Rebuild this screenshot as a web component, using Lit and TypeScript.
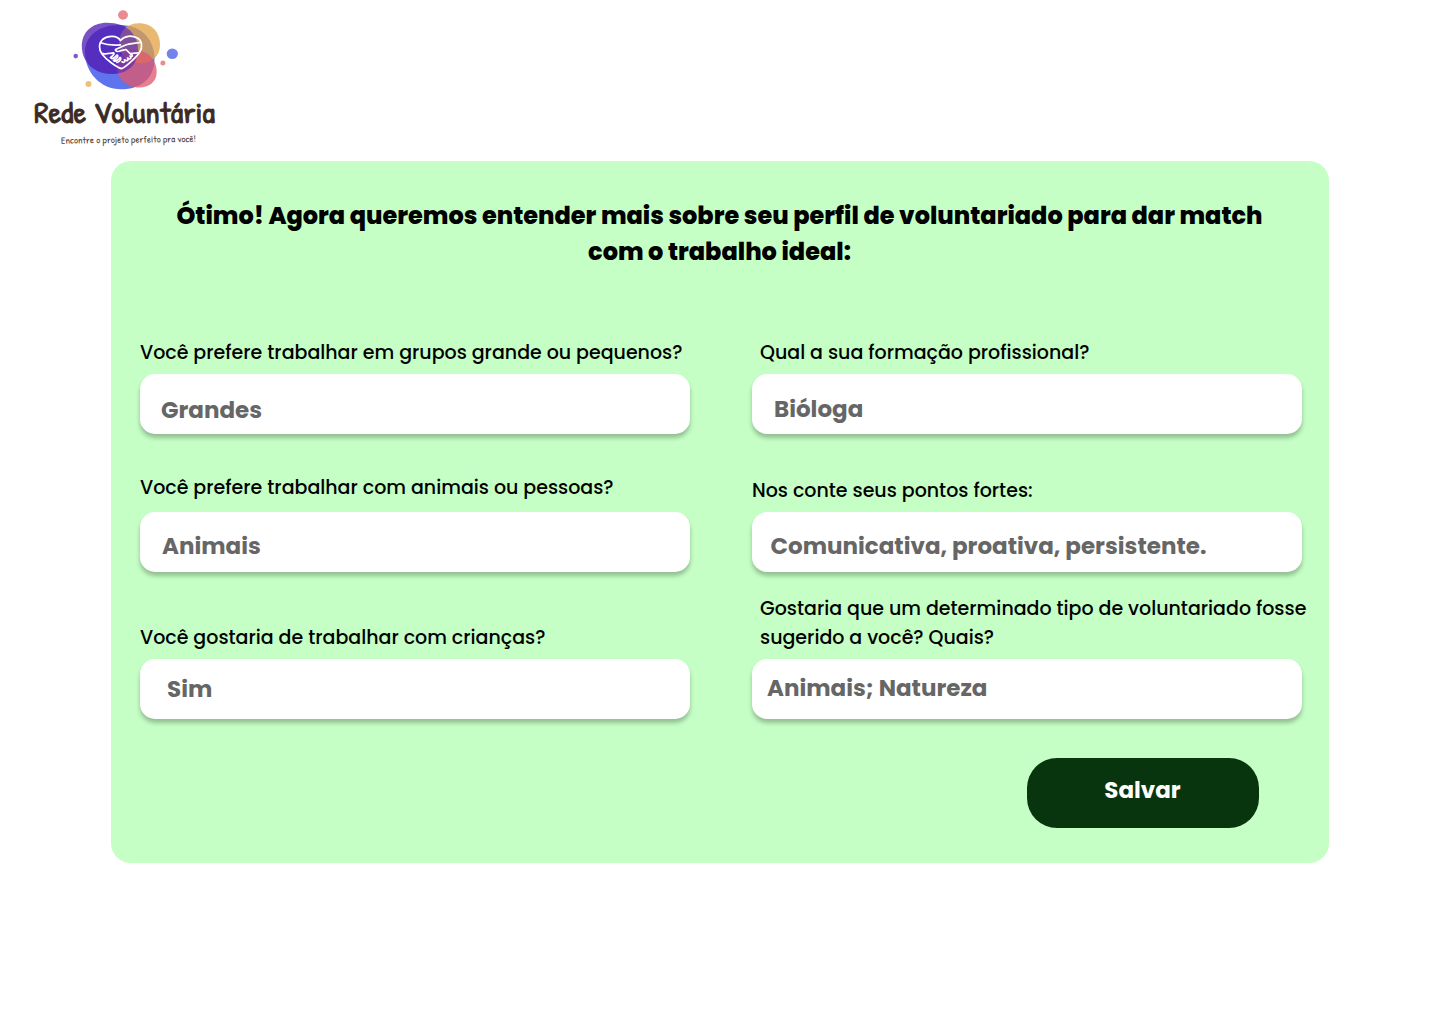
import { LitElement, html, css } from "lit";
import { customElement } from "lit/decorators.js";
import { styleMap } from "lit/directives/style-map.js";

interface Field {
  label: string[];
  indent: number;
  height: number;
  gap: number;
  value: string;
  padTop: number;
  padLeft: number;
}

const LEFT: Field[] = [
  { label: ["Você prefere trabalhar em grupos grande ou pequenos?"], indent: 0, height: 97, gap: 7, value: "Grandes", padTop: 18, padLeft: 21 },
  { label: ["Você prefere trabalhar com animais ou pessoas?"], indent: 0, height: 138, gap: 10, value: "Animais", padTop: 16, padLeft: 22 },
  { label: ["Você gostaria de trabalhar com crianças?"], indent: 0, height: 147, gap: 7, value: "Sim", padTop: 12, padLeft: 27 },
];

const RIGHT: Field[] = [
  { label: ["Qual a sua formação profissional?"], indent: 8, height: 97, gap: 7, value: "Bióloga", padTop: 17, padLeft: 22 },
  { label: ["Nos conte seus pontos fortes:"], indent: 0, height: 138, gap: 7, value: "Comunicativa, proativa, persistente.", padTop: 16, padLeft: 18.5 },
  { label: ["Gostaria que um determinado tipo de voluntariado fosse", "sugerido a você? Quais?"], indent: 8, height: 147, gap: 7, value: "Animais; Natureza", padTop: 11, padLeft: 15 },
];

@customElement("brand-logo")
export class BrandLogo extends LitElement {
  static styles = css`
    :host { display: block; width: 250px; height: 161px; }
    svg { display: block; }
    .name { font: 400 30px "Patrick Hand", "Open Sans", sans-serif; fill: #3b2a25; stroke: #3b2a25; stroke-width: 0.8; stroke-linejoin: round; }
    .tag { font: 400 9.5px "Patrick Hand", "Open Sans", sans-serif; fill: #4b3b36; }
    .heart { fill: none; stroke: #fff; stroke-width: 1.7; stroke-linecap: round; stroke-linejoin: round; }
  `;
  render() {
    return html`
      <svg width="250" height="161" viewBox="0 0 250 161">
        <path fill="#6073ee" d="M120 25C143 25 154.500 41 154.500 59C154.500 78 141 89.300 121 89.300C101 89.300 85 73 85 52C85 36 99 25 120 25Z" />
        <path fill="#5a2bb4" fill-opacity=".82" d="M107 22.700C127 22.700 138 34 138 50C138 65 127 74 112 74C95 74 81.800 63 81.800 46C81.800 32 92 22.700 107 22.700Z" />
        <path fill="#e2a344" fill-opacity=".76" d="M139 23.200C152 23.200 160 32 160 45C160 56 152 63.200 141 63.200C128 63.200 119 54 119 43C119 31 127 23.200 139 23.200Z" />
        <path fill="#e0586a" fill-opacity=".76" d="M135 50.200C148 50.200 156.700 60 156.700 72C156.700 82 149 87.500 139 87.500C127 87.500 117 79 117 67C117 57 124 50.200 135 50.200Z" />
        <path fill="#5126bf" fill-opacity=".6" d="M119 25C130 27 138 37 138 50C138 65 127 74 112 74C102 74 94 70 89 65C86 59 85 56 85 50C86 36 99 25 119 25Z" />
        <ellipse cx="123" cy="15" rx="5" ry="4.700" fill="#e98c92" />
        <ellipse cx="172.300" cy="53.700" rx="5.600" ry="5.300" fill="#7482ee" />
        <circle cx="162.900" cy="63" r="2.500" fill="#e98c92" />
        <circle cx="75.700" cy="56.100" r="2.300" fill="#8759c4" />
        <circle cx="88.500" cy="83.900" r="3" fill="#efbf7c" />
        <g class="heart">
          <path d="M120.500 40.500C117 35.300 108 35.200 102.500 39.500C98.500 43.500 98.700 49.500 102 54C106 59.500 116 67 121.500 68.600C125 68 136 57.500 139.500 52.500C143 47 142 40.500 137.500 38C131.500 35.200 124.500 35.500 120.500 40.500Z" />
          <path d="M100.500 42.800C107 45 113 45.500 120.500 44.800M140.500 42.500C134 43.500 129 43.500 124.500 45.500L115.500 49.500C115.500 52 118.500 52 122 50.300L126 49.500L130.500 54" />
          <path d="M103 53.500C106 55 107.500 52.800 110.500 53.300L113.500 52.800C115 53.500 113 56 110.500 57.500C112 60 115 57.500 117 55C119 55.500 117 59 113.500 60.500C115 62.500 118.500 60 120 57.500C122 59 119.500 62 117 62.500M122 61.800C124 63 125.500 61.500 124.500 59.800C127 61.500 129 60.500 127.500 58C130 60 132 58.500 130 56C132.500 57.500 133.500 55.500 130.500 53.500L138 52.800" />
        </g>
        <text class="name" x="34" y="122.700" textLength="181" lengthAdjust="spacingAndGlyphs">Rede Voluntária</text>
        <text class="tag" x="61" y="143.700" textLength="135" lengthAdjust="spacingAndGlyphs" transform="rotate(-.7 61 144)">Encontre o projeto perfeito pra você!</text>
      </svg>
    `;
  }
}

@customElement("app-root")
export class AppRoot extends LitElement {
  static styles = css`
    :host { display: block; width: 1440px; height: 1024px; background: #fff; overflow: hidden; font-family: Poppins, Inter, "Open Sans", sans-serif; color: #000; }
    .card { box-sizing: border-box; width: 1218px; height: 702px; margin-left: 111px; padding: 37px 27px 35px 29px; border-radius: 20px; background: #c5ffc5; display: flex; flex-direction: column; }
    h1 { margin: 0 3px 0 0; text-align: center; font-size: 24px; line-height: 36px; font-weight: 800; white-space: nowrap; }
    .columns { display: flex; gap: 62px; margin-top: 67px; }
    .column { width: 550px; }
    .field { display: flex; flex-direction: column; justify-content: flex-end; }
    .label { font-size: 19px; line-height: 29px; font-weight: 500; white-space: nowrap; }
    .line { display: block; }
    .value { box-sizing: border-box; flex: none; height: 60px; border-radius: 15px; background: #fff; box-shadow: 0 4px 4px rgba(0, 0, 0, 0.25); color: #666; font-size: 23px; line-height: 36px; font-weight: 700; white-space: nowrap; }
    .save { box-sizing: border-box; align-self: flex-end; width: 232px; height: 70px; margin: 39px 43px 0 0; padding: 14px 1px 20px 0; border: 0; border-radius: 30px; background: #09350e; color: #fff; font: inherit; font-size: 23px; line-height: 36px; font-weight: 700; }
  `;

  private field(f: Field) {
    return html`
      <div class="field" style=${styleMap({ height: `${f.height}px` })}>
        <div class="label" style=${styleMap({ marginLeft: `${f.indent}px`, marginBottom: `${f.gap}px` })}>
          ${f.label.map((t) => html`<span class="line">${t}</span>`)}
        </div>
        <div class="value" style=${styleMap({ padding: `${f.padTop}px 0 0 ${f.padLeft}px` })}>${f.value}</div>
      </div>
    `;
  }

  render() {
    return html`
      <brand-logo></brand-logo>
      <main class="card">
        <h1>Ótimo! Agora queremos entender mais sobre seu perfil de voluntariado para dar match<br />com o trabalho ideal:</h1>
        <div class="columns">
          <div class="column">${LEFT.map((f) => this.field(f))}</div>
          <div class="column">${RIGHT.map((f) => this.field(f))}</div>
        </div>
        <button class="save">Salvar</button>
      </main>
    `;
  }
}
